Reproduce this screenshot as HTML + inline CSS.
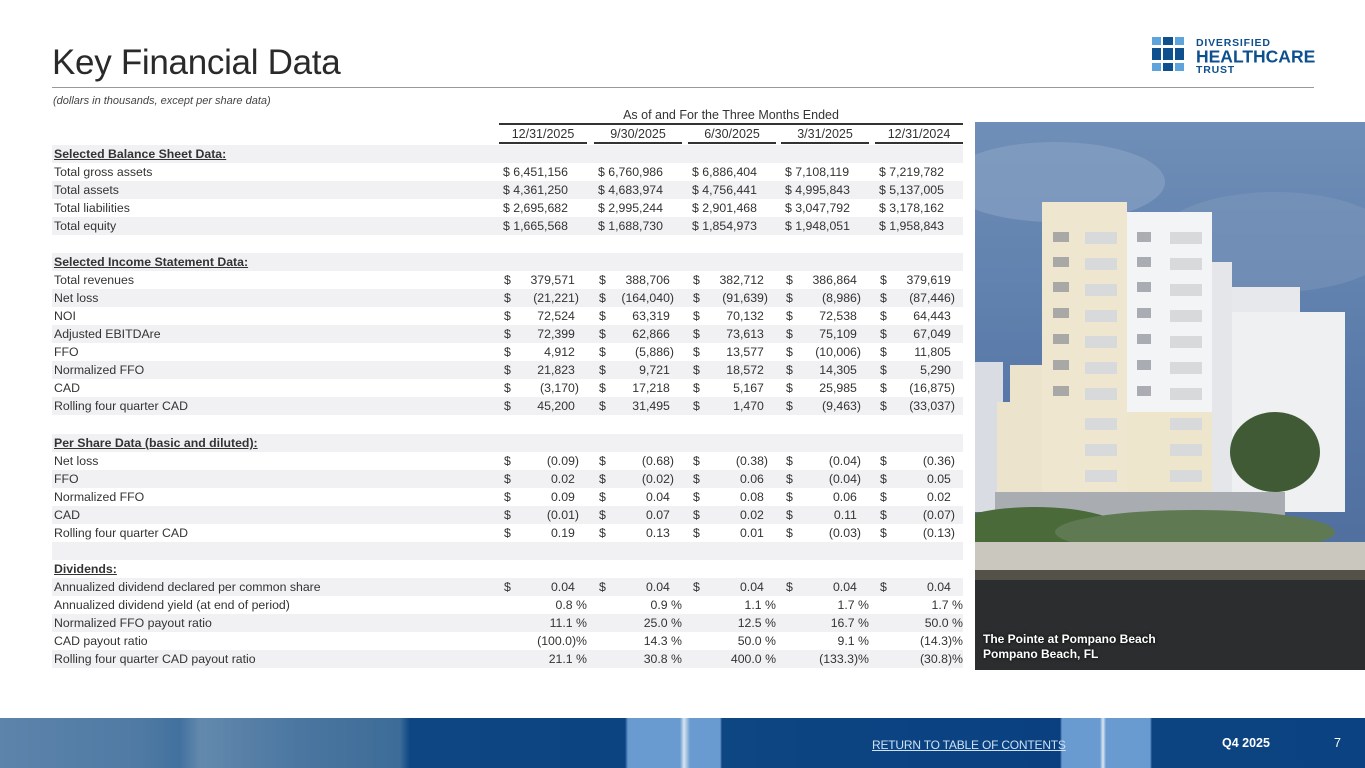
<!DOCTYPE html>
<html><head><meta charset="utf-8">
<style>
*{margin:0;padding:0;box-sizing:border-box}
body{width:1365px;height:768px;position:relative;overflow:hidden;background:#fff;font-family:"Liberation Sans",sans-serif;color:#333}
.title{position:absolute;left:52px;top:43px;font-size:35px;color:#2a2a2a;letter-spacing:-0.3px}
.hl{position:absolute;left:52px;top:87px;width:1262px;height:1px;background:#999}
.sub{position:absolute;left:53px;top:95px;font-size:11px;font-style:italic;color:#444}
.grp{position:absolute;left:499px;top:108px;width:464px;text-align:center;font-size:12.5px}
.gl{position:absolute;left:499px;top:123px;width:464px;height:2px;background:#333}
.ch{position:absolute;top:127px;width:88px;text-align:center;font-size:12.5px;border-bottom:2px solid #333;height:17px}
.r{position:absolute;left:52px;width:911px;height:18px;font-size:12.3px;line-height:18px}
.s{background:#f1f1f3}
.l{position:absolute;left:2px}
.b{font-weight:bold;text-decoration:underline}
.v{position:absolute;width:88px;text-align:right}
.v i{font-style:normal;position:absolute;left:5px}
.v em{font-style:normal;visibility:hidden}
.c1{left:447px}.c2{left:542px}.c3{left:636px}.c4{left:729px}.c5{left:823px}
.v.n{padding-right:8px}
.foot{position:absolute;left:0;top:718px;width:1365px;height:50px;background:linear-gradient(90deg,#5d84ab 0,#4f7aa3 140px,#42719f 180px,#6389ad 200px,#4a76a0 300px,#3d6c98 400px,#0d4683 410px,#0c4482 625px,#6a9bd0 628px,#6a9bd0 680px,#d9e4ef 684px,#6a9bd0 690px,#6a9bd0 720px,#0d4683 722px,#0a4080 1060px,#6a9bd0 1062px,#6a9bd0 1100px,#e0e8f0 1103px,#6a9bd0 1106px,#6a9bd0 1150px,#0c4482 1152px,#0b4382 1365px)}
.ret{position:absolute;left:872px;top:738px;font-size:12px;color:#cfe1f3;text-decoration:underline;letter-spacing:-0.2px}
.q{position:absolute;left:1222px;top:736px;font-size:12.5px;font-weight:bold;color:#fff}
.pg{position:absolute;left:1334px;top:736px;font-size:12.5px;color:#fff}
.photo{position:absolute;left:975px;top:122px;width:390px;height:548px;overflow:hidden}
.cap{position:absolute;left:983px;top:632px;font-size:12px;font-weight:bold;color:#fff;line-height:15px;text-shadow:0 0 3px #000}
</style></head><body>
<div class="title">Key Financial Data</div>
<div class="hl"></div>
<div class="sub">(dollars in thousands, except per share data)</div>

<svg style="position:absolute;left:1151px;top:35px" width="170" height="40" viewBox="0 0 170 40">
<rect x="1" y="2" width="9" height="8" fill="#5ea4dc"/><rect x="12" y="2" width="10" height="8" fill="#0e4f8e"/><rect x="24" y="2" width="9" height="8" fill="#5ea4dc"/>
<rect x="1" y="13" width="9" height="12" fill="#0e4f8e"/><rect x="12" y="13" width="10" height="12" fill="#0e4f8e"/><rect x="24" y="13" width="9" height="12" fill="#0e4f8e"/>
<rect x="1" y="28" width="9" height="8" fill="#5ea4dc"/><rect x="12" y="28" width="10" height="8" fill="#0e4f8e"/><rect x="24" y="28" width="9" height="8" fill="#5ea4dc"/>
<text x="45" y="11" font-family="Liberation Sans" font-weight="bold" font-size="10.5" fill="#0e4f8e" letter-spacing="0.8">DIVERSIFIED</text>
<text x="45" y="27.5" font-family="Liberation Sans" font-weight="bold" font-size="17.5" fill="#0e4f8e">HEALTHCARE</text>
<text x="45" y="38" font-family="Liberation Sans" font-weight="bold" font-size="10.5" fill="#0e4f8e" letter-spacing="0.8">TRUST</text>
</svg>

<div class="grp">As of and For the Three Months Ended</div>
<div class="gl"></div>
<div class="ch" style="left:499px">12/31/2025</div>
<div class="ch" style="left:594px">9/30/2025</div>
<div class="ch" style="left:688px">6/30/2025</div>
<div class="ch" style="left:781px">3/31/2025</div>
<div class="ch" style="left:875px">12/31/2024</div>

<div class="r s" style="top:145px"><span class="l b">Selected Balance Sheet Data:</span></div>
<div class="r" style="top:163px"><span class="l">Total gross assets</span><span class="v n c1" style="text-align:left;padding-left:4px">$ 6,451,156</span><span class="v n c2" style="text-align:left;padding-left:4px">$ 6,760,986</span><span class="v n c3" style="text-align:left;padding-left:4px">$ 6,886,404</span><span class="v n c4" style="text-align:left;padding-left:4px">$ 7,108,119</span><span class="v n c5" style="text-align:left;padding-left:4px">$ 7,219,782</span></div>
<div class="r s" style="top:181px"><span class="l">Total assets</span><span class="v n c1" style="text-align:left;padding-left:4px">$ 4,361,250</span><span class="v n c2" style="text-align:left;padding-left:4px">$ 4,683,974</span><span class="v n c3" style="text-align:left;padding-left:4px">$ 4,756,441</span><span class="v n c4" style="text-align:left;padding-left:4px">$ 4,995,843</span><span class="v n c5" style="text-align:left;padding-left:4px">$ 5,137,005</span></div>
<div class="r" style="top:199px"><span class="l">Total liabilities</span><span class="v n c1" style="text-align:left;padding-left:4px">$ 2,695,682</span><span class="v n c2" style="text-align:left;padding-left:4px">$ 2,995,244</span><span class="v n c3" style="text-align:left;padding-left:4px">$ 2,901,468</span><span class="v n c4" style="text-align:left;padding-left:4px">$ 3,047,792</span><span class="v n c5" style="text-align:left;padding-left:4px">$ 3,178,162</span></div>
<div class="r s" style="top:217px"><span class="l">Total equity</span><span class="v n c1" style="text-align:left;padding-left:4px">$ 1,665,568</span><span class="v n c2" style="text-align:left;padding-left:4px">$ 1,688,730</span><span class="v n c3" style="text-align:left;padding-left:4px">$ 1,854,973</span><span class="v n c4" style="text-align:left;padding-left:4px">$ 1,948,051</span><span class="v n c5" style="text-align:left;padding-left:4px">$ 1,958,843</span></div>
<div class="r" style="top:235px"></div>
<div class="r s" style="top:253px"><span class="l b">Selected Income Statement Data:</span></div>
<div class="r" style="top:271px"><span class="l">Total revenues</span><span class="v n c1"><i>$</i>379,571<em>)</em></span><span class="v n c2"><i>$</i>388,706<em>)</em></span><span class="v n c3"><i>$</i>382,712<em>)</em></span><span class="v n c4"><i>$</i>386,864<em>)</em></span><span class="v n c5"><i>$</i>379,619<em>)</em></span></div>
<div class="r s" style="top:289px"><span class="l">Net loss</span><span class="v n c1"><i>$</i>(21,221)</span><span class="v n c2"><i>$</i>(164,040)</span><span class="v n c3"><i>$</i>(91,639)</span><span class="v n c4"><i>$</i>(8,986)</span><span class="v n c5"><i>$</i>(87,446)</span></div>
<div class="r" style="top:307px"><span class="l">NOI</span><span class="v n c1"><i>$</i>72,524<em>)</em></span><span class="v n c2"><i>$</i>63,319<em>)</em></span><span class="v n c3"><i>$</i>70,132<em>)</em></span><span class="v n c4"><i>$</i>72,538<em>)</em></span><span class="v n c5"><i>$</i>64,443<em>)</em></span></div>
<div class="r s" style="top:325px"><span class="l">Adjusted EBITDAre</span><span class="v n c1"><i>$</i>72,399<em>)</em></span><span class="v n c2"><i>$</i>62,866<em>)</em></span><span class="v n c3"><i>$</i>73,613<em>)</em></span><span class="v n c4"><i>$</i>75,109<em>)</em></span><span class="v n c5"><i>$</i>67,049<em>)</em></span></div>
<div class="r" style="top:343px"><span class="l">FFO</span><span class="v n c1"><i>$</i>4,912<em>)</em></span><span class="v n c2"><i>$</i>(5,886)</span><span class="v n c3"><i>$</i>13,577<em>)</em></span><span class="v n c4"><i>$</i>(10,006)</span><span class="v n c5"><i>$</i>11,805<em>)</em></span></div>
<div class="r s" style="top:361px"><span class="l">Normalized FFO</span><span class="v n c1"><i>$</i>21,823<em>)</em></span><span class="v n c2"><i>$</i>9,721<em>)</em></span><span class="v n c3"><i>$</i>18,572<em>)</em></span><span class="v n c4"><i>$</i>14,305<em>)</em></span><span class="v n c5"><i>$</i>5,290<em>)</em></span></div>
<div class="r" style="top:379px"><span class="l">CAD</span><span class="v n c1"><i>$</i>(3,170)</span><span class="v n c2"><i>$</i>17,218<em>)</em></span><span class="v n c3"><i>$</i>5,167<em>)</em></span><span class="v n c4"><i>$</i>25,985<em>)</em></span><span class="v n c5"><i>$</i>(16,875)</span></div>
<div class="r s" style="top:397px"><span class="l">Rolling four quarter CAD</span><span class="v n c1"><i>$</i>45,200<em>)</em></span><span class="v n c2"><i>$</i>31,495<em>)</em></span><span class="v n c3"><i>$</i>1,470<em>)</em></span><span class="v n c4"><i>$</i>(9,463)</span><span class="v n c5"><i>$</i>(33,037)</span></div>
<div class="r" style="top:415px"></div>
<div class="r s" style="top:434px"><span class="l b">Per Share Data (basic and diluted):</span></div>
<div class="r" style="top:452px"><span class="l">Net loss</span><span class="v n c1"><i>$</i>(0.09)</span><span class="v n c2"><i>$</i>(0.68)</span><span class="v n c3"><i>$</i>(0.38)</span><span class="v n c4"><i>$</i>(0.04)</span><span class="v n c5"><i>$</i>(0.36)</span></div>
<div class="r s" style="top:470px"><span class="l">FFO</span><span class="v n c1"><i>$</i>0.02<em>)</em></span><span class="v n c2"><i>$</i>(0.02)</span><span class="v n c3"><i>$</i>0.06<em>)</em></span><span class="v n c4"><i>$</i>(0.04)</span><span class="v n c5"><i>$</i>0.05<em>)</em></span></div>
<div class="r" style="top:488px"><span class="l">Normalized FFO</span><span class="v n c1"><i>$</i>0.09<em>)</em></span><span class="v n c2"><i>$</i>0.04<em>)</em></span><span class="v n c3"><i>$</i>0.08<em>)</em></span><span class="v n c4"><i>$</i>0.06<em>)</em></span><span class="v n c5"><i>$</i>0.02<em>)</em></span></div>
<div class="r s" style="top:506px"><span class="l">CAD</span><span class="v n c1"><i>$</i>(0.01)</span><span class="v n c2"><i>$</i>0.07<em>)</em></span><span class="v n c3"><i>$</i>0.02<em>)</em></span><span class="v n c4"><i>$</i>0.11<em>)</em></span><span class="v n c5"><i>$</i>(0.07)</span></div>
<div class="r" style="top:524px"><span class="l">Rolling four quarter CAD</span><span class="v n c1"><i>$</i>0.19<em>)</em></span><span class="v n c2"><i>$</i>0.13<em>)</em></span><span class="v n c3"><i>$</i>0.01<em>)</em></span><span class="v n c4"><i>$</i>(0.03)</span><span class="v n c5"><i>$</i>(0.13)</span></div>
<div class="r s" style="top:542px"></div>
<div class="r" style="top:560px"><span class="l b">Dividends:</span></div>
<div class="r s" style="top:578px"><span class="l">Annualized dividend declared per common share</span><span class="v n c1"><i>$</i>0.04<em>)</em></span><span class="v n c2"><i>$</i>0.04<em>)</em></span><span class="v n c3"><i>$</i>0.04<em>)</em></span><span class="v n c4"><i>$</i>0.04<em>)</em></span><span class="v n c5"><i>$</i>0.04<em>)</em></span></div>
<div class="r" style="top:596px"><span class="l">Annualized dividend yield (at end of period)</span><span class="v c1">0.8 %</span><span class="v c2">0.9 %</span><span class="v c3">1.1 %</span><span class="v c4">1.7 %</span><span class="v c5">1.7 %</span></div>
<div class="r s" style="top:614px"><span class="l">Normalized FFO payout ratio</span><span class="v c1">11.1 %</span><span class="v c2">25.0 %</span><span class="v c3">12.5 %</span><span class="v c4">16.7 %</span><span class="v c5">50.0 %</span></div>
<div class="r" style="top:632px"><span class="l">CAD payout ratio</span><span class="v c1">(100.0)%</span><span class="v c2">14.3 %</span><span class="v c3">50.0 %</span><span class="v c4">9.1 %</span><span class="v c5">(14.3)%</span></div>
<div class="r s" style="top:650px"><span class="l">Rolling four quarter CAD payout ratio</span><span class="v c1">21.1 %</span><span class="v c2">30.8 %</span><span class="v c3">400.0 %</span><span class="v c4">(133.3)%</span><span class="v c5">(30.8)%</span></div>

<div class="photo">
<svg width="390" height="548" viewBox="0 0 390 548">
<defs><linearGradient id="sky" x1="0" y1="0" x2="0" y2="1"><stop offset="0" stop-color="#6f8fb8"/><stop offset="0.5" stop-color="#5878a8"/><stop offset="1" stop-color="#4a6896"/></linearGradient></defs>
<rect width="390" height="548" fill="url(#sky)"/>
<ellipse cx="80" cy="60" rx="110" ry="40" fill="#8aa3c4" opacity="0.6"/>
<ellipse cx="300" cy="120" rx="120" ry="50" fill="#7d97bc" opacity="0.5"/>
<rect x="0" y="240" width="28" height="150" fill="#d9dde3"/>
<rect x="255" y="165" width="70" height="40" fill="#e6e8ec"/>
<rect x="250" y="190" width="120" height="200" fill="#eef0f2"/>
<rect x="22" y="280" width="60" height="100" fill="#ece3cc"/>
<rect x="35" y="243" width="120" height="130" fill="#ece3cc"/>
<rect x="67" y="80" width="85" height="300" fill="#efe6cf"/>
<rect x="152" y="90" width="85" height="200" fill="#f3f4f5"/>
<rect x="152" y="290" width="85" height="90" fill="#eee5cd"/>
<rect x="237" y="140" width="20" height="250" fill="#e4e6e9"/>
<g fill="#8b8f96" opacity="0.7">
<rect x="78" y="110" width="16" height="10"/><rect x="78" y="135" width="16" height="10"/><rect x="78" y="160" width="16" height="10"/><rect x="78" y="186" width="16" height="10"/><rect x="78" y="212" width="16" height="10"/><rect x="78" y="238" width="16" height="10"/><rect x="78" y="264" width="16" height="10"/>
<rect x="162" y="110" width="14" height="10"/><rect x="162" y="135" width="14" height="10"/><rect x="162" y="160" width="14" height="10"/><rect x="162" y="186" width="14" height="10"/><rect x="162" y="212" width="14" height="10"/><rect x="162" y="238" width="14" height="10"/><rect x="162" y="264" width="14" height="10"/>
</g>
<g fill="#d8d9db"><rect x="110" y="110" width="32" height="12"/><rect x="110" y="136" width="32" height="12"/><rect x="110" y="162" width="32" height="12"/><rect x="110" y="188" width="32" height="12"/><rect x="110" y="214" width="32" height="12"/><rect x="110" y="240" width="32" height="12"/><rect x="110" y="266" width="32" height="12"/><rect x="110" y="296" width="32" height="12"/><rect x="110" y="322" width="32" height="12"/><rect x="110" y="348" width="32" height="12"/>
<rect x="195" y="110" width="32" height="12"/><rect x="195" y="136" width="32" height="12"/><rect x="195" y="162" width="32" height="12"/><rect x="195" y="188" width="32" height="12"/><rect x="195" y="214" width="32" height="12"/><rect x="195" y="240" width="32" height="12"/><rect x="195" y="266" width="32" height="12"/><rect x="195" y="296" width="32" height="12"/><rect x="195" y="322" width="32" height="12"/><rect x="195" y="348" width="32" height="12"/></g>
<rect x="20" y="370" width="290" height="30" fill="#a9adb2"/>
<ellipse cx="300" cy="330" rx="45" ry="40" fill="#3f5a34"/>
<ellipse cx="60" cy="410" rx="90" ry="25" fill="#4a6a3a"/>
<ellipse cx="220" cy="410" rx="140" ry="22" fill="#5f7a52"/>
<rect x="0" y="420" width="390" height="30" fill="#c9c7be"/>
<rect x="0" y="448" width="390" height="100" fill="#2b2d2e"/>
<rect x="0" y="448" width="390" height="10" fill="#545148"/>
</svg>
</div>
<div class="cap">The Pointe at Pompano Beach<br>Pompano Beach, FL</div>

<div class="foot"></div>
<div class="ret">RETURN TO TABLE OF CONTENTS</div>
<div class="q">Q4 2025</div>
<div class="pg">7</div>
</body></html>
